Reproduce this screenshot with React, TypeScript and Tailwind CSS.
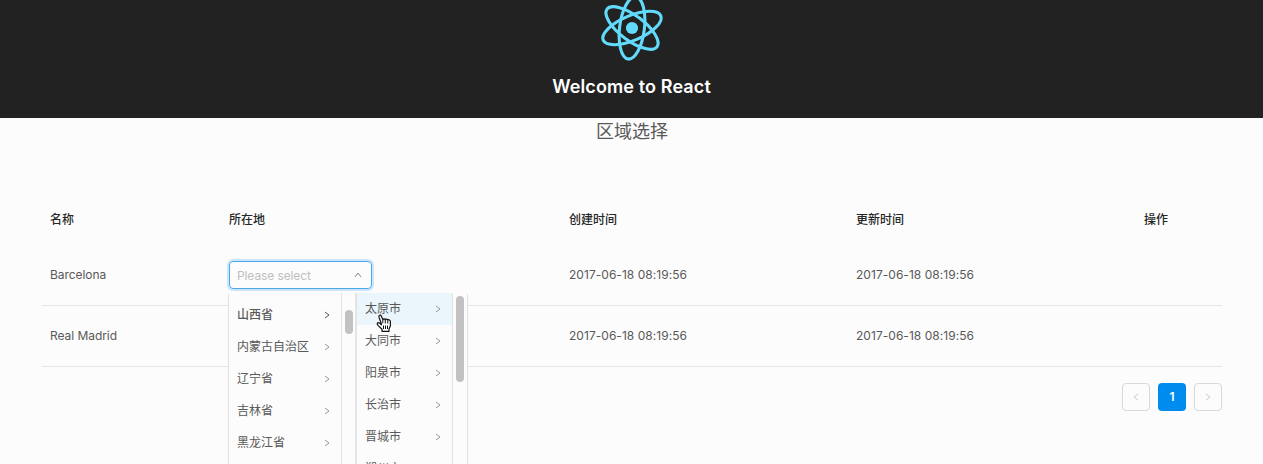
import React from "react";

const provinces = ["山西省", "内蒙古自治区", "辽宁省", "吉林省", "黑龙江省"];
const cities = ["太原市", "大同市", "阳泉市", "长治市", "晋城市", "朔州市"];
const rows = [
  { name: "Barcelona", time: "2017-06-18 08:19:56" },
  { name: "Real Madrid", time: "2017-06-18 08:19:56" },
];
const columns = "grid grid-cols-[179px_340px_287px_288px_86px]";

function Chevron({ className = "" }: { className?: string }) {
  return (
    <svg className={className} width="8" height="8" viewBox="0 0 8 8" fill="none" stroke="currentColor" strokeWidth="1">
      <path d="M2 1 6 4 2 7" />
    </svg>
  );
}

function Logo() {
  return (
    <svg width="80" height="80" viewBox="-40 -40 80 80" fill="none" stroke="#61dafb" strokeWidth="3.1">
      <ellipse rx="12.4" ry="31.3" transform="rotate(7)" />
      <ellipse rx="12.4" ry="31.3" transform="rotate(67)" />
      <ellipse rx="12.4" ry="31.3" transform="rotate(127)" />
      <circle r="6.1" fill="#61dafb" stroke="none" />
    </svg>
  );
}

function Cascader() {
  return (
    <div className="relative">
      <div className="flex h-7 w-[143px] items-center justify-between rounded border border-[#49a9ee] pr-[9px] pl-[7px] shadow-[0_0_0_2px_rgba(16,142,233,0.2)]">
        <span className="pt-px text-[12px] tracking-[-0.1px] text-[#bfbfbf]">Please select</span>
        <Chevron className="-rotate-90 text-[#888]" />
      </div>
      <div className="absolute top-8 left-0 z-10 flex h-[192px] w-[238px] bg-[#fcfcfc] shadow-[0_2px_1px_0_rgba(0,0,0,0.08),-1px_1px_0_0_#e4e4e4,1px_1px_0_0_#e4e4e4]">
        <div className="relative flex w-[128px] overflow-hidden border-r-2 border-[#e4e4e4]">
          <ul className="w-[113px] border-r border-[#e2e2e2] pt-[6px]">
            {provinces.map((p, i) => (
              <li key={p} className={`flex h-8 items-center justify-between pr-[10px] pl-2 ${i === 0 ? "font-medium" : ""}`}>
                <span className="whitespace-nowrap">{p}</span>
                <Chevron className={i === 0 ? "text-[#555]" : "text-[#999]"} />
              </li>
            ))}
          </ul>
          <div className="mt-[17px] ml-[3px] h-6 w-2 rounded-full bg-[#c2c2c2]" />
        </div>
        <div className="flex w-[110px] overflow-hidden">
          <ul className="w-[96px] border-r border-[#e2e2e2]">
            {cities.map((c, i) => (
              <li key={c} className={`flex h-8 items-center justify-between pr-[10px] pl-2 ${i === 0 ? "bg-[#eaf5fc]" : ""}`}>
                <span>{c}</span>
                <Chevron className="text-[#999]" />
              </li>
            ))}
          </ul>
          <div className="mt-[3px] ml-[3px] h-[86px] w-2 rounded-full bg-[#c2c2c2]" />
        </div>
        <svg className="absolute top-[20px] left-[147px]" width="17" height="20" viewBox="0 0 17 20">
          <path
            d="M5.3 10.5 3 4.2C2.4 2.2 4.6 1.4 5.4 3.2L6.8 6.6C7.4 5.6 8.9 5.7 9.3 6.8 9.9 5.8 11.4 6 11.8 7.2 12.7 6.2 14.4 7 14.4 8.6V12.8L13 16V18.3H6V16.2L2.2 12.6C.8 11.2.9 9.6 2.4 9.6 3.4 9.6 4.2 10.5 5.3 11.8Z"
            fill="#fff" stroke="#111" strokeWidth="1.2" strokeLinejoin="round"
          />
          <path d="M6.8 6.6v3.7M9.3 7v3.5M11.8 7.4v3.2M7.5 12.5V16M9.5 12.5V16M11.5 12.5V16" fill="none" stroke="#111" />
        </svg>
      </div>
    </div>
  );
}

export default function App() {
  return (
    <div className="h-[464px] overflow-hidden bg-[#fcfcfc] font-['Inter','Noto_Sans_CJK_SC',sans-serif] text-[12px] leading-[18px] text-[#595959]">
      <header className="flex h-[118px] flex-col items-center overflow-hidden bg-[#222]">
        <div className="-mt-3 h-20 shrink-0">
          <Logo />
        </div>
        <h2 className="mt-[5px] text-[18px] leading-[27px] font-semibold tracking-[0.12px] whitespace-nowrap text-white">Welcome to React</h2>
      </header>
      <p className="h-[75px] pl-px text-center text-[18px] leading-[27px]">区域选择</p>
      <main className="ml-[42px] w-[1180px]">
        <div className={`${columns} h-[52px] items-center pt-[2px] font-medium text-[#262626]`}>
          <span className="pl-2">名称</span>
          <span className="pl-2">所在地</span>
          <span className="pl-2">创建时间</span>
          <span className="pl-2">更新时间</span>
          <span className="pl-2">操作</span>
        </div>
        {rows.map((row, i) => (
          <div key={row.name} className={`${columns} h-[61px] items-center border-b border-[#e6e6e6]`}>
            <span className="pl-2 tracking-[-0.05px]">{row.name}</span>
            <div className="pl-2">{i === 0 && <Cascader />}</div>
            <span className="pl-2 tracking-[0.04px]">{row.time}</span>
            <span className="pl-2 tracking-[0.04px]">{row.time}</span>
            <span />
          </div>
        ))}
        <nav className="mt-4 flex justify-end gap-2">
          <button className="flex size-7 items-center justify-center rounded border border-[#d9d9d9] text-[#c8c8c8]">
            <Chevron className="rotate-180" />
          </button>
          <button className="flex size-7 items-center justify-center rounded bg-[#008cee] font-semibold text-white">1</button>
          <button className="flex size-7 items-center justify-center rounded border border-[#d9d9d9] text-[#c8c8c8]">
            <Chevron />
          </button>
        </nav>
      </main>
    </div>
  );
}
